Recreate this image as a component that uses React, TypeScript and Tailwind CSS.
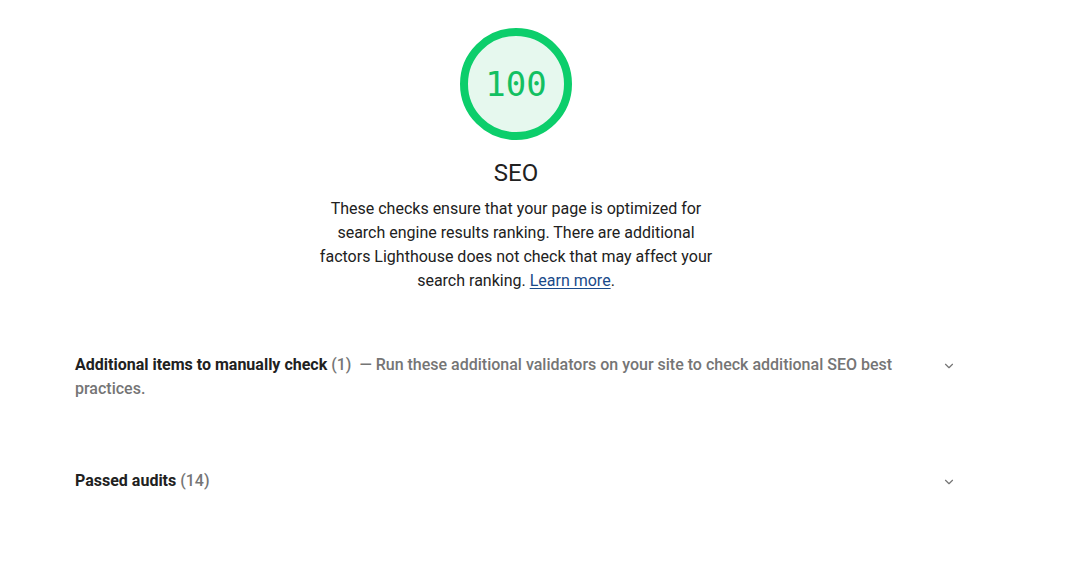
import { ChevronDown } from "lucide-react"

function Gauge({ score }: { score: number }) {
  return (
    <div className="relative h-[112px] w-[112px]">
      <svg viewBox="0 0 112 112" className="h-[112px] w-[112px]">
        <circle cx="56" cy="56" r="52" fill="#e6f8ee" stroke="#0cce6b" strokeWidth="8" />
      </svg>
      <div className="absolute inset-0 flex items-center justify-center text-[34px] text-[#13c062] [font-family:'DejaVu_Sans_Mono',monospace]">
        {score}
      </div>
    </div>
  )
}

function AuditGroup({ title, count, description }: { title: string; count: number; description?: string }) {
  return (
    <div className="flex items-start">
      <div className="flex-1 pr-[48px] text-[16px] leading-[24px]">
        <span className="font-bold text-[#212121]">{title}</span>{" "}
        <span className="font-medium text-[#757575]">({count})</span>
        {description && (
          <span className="font-medium text-[#757575]">
            {"  "}&nbsp;— {description}
          </span>
        )}
      </div>
      <div className="flex h-[26px] w-[16px] items-center justify-center">
        <ChevronDown className="h-[14px] w-[14px] text-[#757575]" strokeWidth={2} />
      </div>
    </div>
  )
}

export default function App() {
  return (
    <div className="min-h-[570px] bg-white [font-family:Roboto,'Liberation_Sans',sans-serif]">
      <div className="w-[882px] ml-[75px]">
        {/* Category header */}
        <div className="flex flex-col items-center pt-[28px]">
          <Gauge score={100} />
          <div className="mt-[17px] text-[24px] leading-[32px] text-[#212121]">SEO</div>
          <p className="mt-[8px] w-[400px] text-center text-[16px] leading-[24px] text-[#212121]">
            These checks ensure that your page is optimized for search engine results ranking. There are
            additional factors Lighthouse does not check that may affect your search ranking.{" "}
            <a href="#" className="text-[#1a4a8a] underline underline-offset-2">
              Learn more
            </a>
            .
          </p>
        </div>

        {/* Audit groups */}
        <div className="mt-[60px]">
          <AuditGroup
            title="Additional items to manually check"
            count={1}
            description="Run these additional validators on your site to check additional SEO best practices."
          />
        </div>
        <div className="mt-[68px]">
          <AuditGroup title="Passed audits" count={14} />
        </div>
      </div>
    </div>
  )
}
